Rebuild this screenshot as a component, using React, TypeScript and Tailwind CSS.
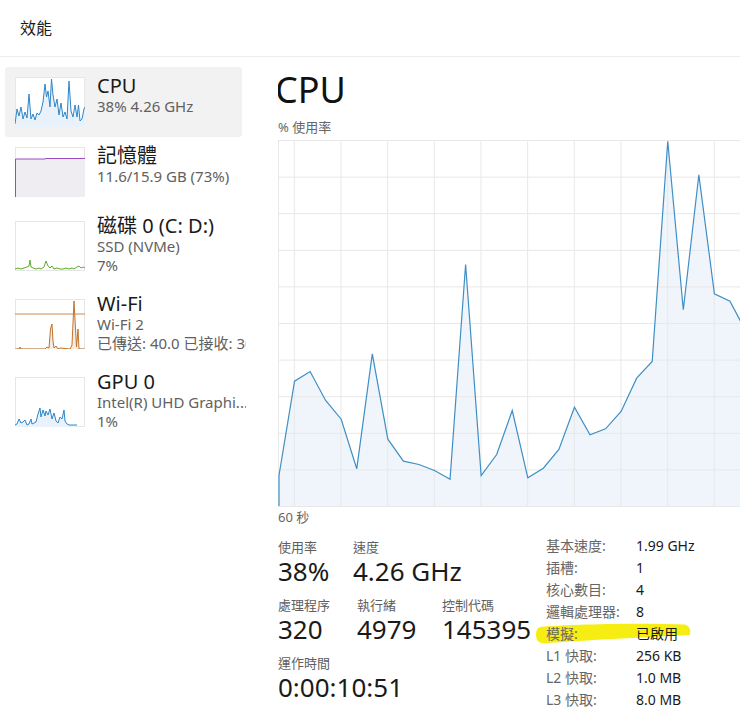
import React from "react";

// 主圖表資料 (y 以圖表頂端為 0)
const mainY = [
  335, 240.7, 231, 260, 278.7, 328.3, 213.3, 298.7, 320.7, 324, 330, 338.7, 124, 335, 314, 270,
  337.3, 327.7, 309, 266.7, 294.3, 288.3, 271, 237.7, 221, 0.7, 169.3, 34.3, 153.3, 160.7, 190,
];
const CH = 366;
const mainPts = mainY.map((y, i) => `${1 + i * 15.55},${y + 0.5}`).join(" ");
const mainArea = `1,${CH} ${mainPts} ${1 + 30 * 15.55},${CH}`;

const cpuThumb =
  "0,47 2,32 4,39 6,30 8,42 10,35 12,41 14,17 16,42 18,37 20,43 22,36 24,38 26,34 28,25 30,7 31.5,20 33,14 35,30 36.5,2 38,18 40,30 42,22 44,38 46,26 48,40 50,35 52,42 54,4 56,34 58,40 60,28 62,40 63.5,28 65,44 67,42 69,32 70,30";
const diskThumb =
  "0,48 3,47 6,48 9,47 12,46 14,45 15,39 16,46 18,47 21,48 24,47 26,48 29,46 31,40 33,45 35,47 37,45 39,48 42,47 45,48 48,48 51,47 54,48 57,47 59,48 62,46 64,45 66,47 68,46 70,47";
const wifiThumb =
  "0,50 4,50 5,48 6,50 30,50 32,48 34,49 35.5,30 37,25 38,42 39,49 41,47 43,50 45,49 55,50 57,46 59,2 60.5,30 61.5,48 63,30 64,50 70,50";
const gpuThumb =
  "0,48 2,47 4,42 6,46 8,45 10,43 12,48 14,47 16,42 17,47 19,46 21,45 23,37 25,31 26,40 28,33 30,39 31,34 33,38 35,32 37,42 39,36 41,44 43,46 45,40 47,42 49,33 50,44 52,47 54,48 62,48";

const Thumb = ({ kind }: { kind: string }) => (
  <svg width="70" height="50" viewBox="0 0 70 50" className="block">
    <rect x="0.5" y="0.5" width="69" height="49" fill="#fff" stroke="#e6e6e6" />
    {kind === "cpu" && (
      <>
        <polygon points={`0,50 ${cpuThumb} 70,50`} fill="#e9f2fa" />
        <polyline points={cpuThumb} fill="none" stroke="#2f86c8" strokeWidth="1" />
      </>
    )}
    {kind === "mem" && (
      <>
        <rect x="0" y="12" width="70" height="38" fill="#efedf1" />
        <polyline points="0.5,50 0.5,12 30,12 31,11.5 70,11.5" fill="none" stroke="#9a4bc0" strokeWidth="1" />
      </>
    )}
    {kind === "disk" && (
      <polyline points={diskThumb} fill="none" stroke="#5fae2e" strokeWidth="1" />
    )}
    {kind === "wifi" && (
      <>
        <line x1="0" y1="15" x2="70" y2="15" stroke="#d08a52" strokeWidth="1" />
        <polygon points={wifiThumb} fill="#f7ece2" />
        <polyline points={wifiThumb} fill="none" stroke="#c0732c" strokeWidth="1" />
      </>
    )}
    {kind === "gpu" && (
      <>
        <polygon points={`0,50 ${gpuThumb} 62,50`} fill="#e9f2fa" />
        <polyline points={gpuThumb} fill="none" stroke="#2f86c8" strokeWidth="1" />
      </>
    )}
  </svg>
);

const items = [
  { kind: "cpu", title: "CPU", lines: ["38% 4.26 GHz"], active: true },
  { kind: "mem", title: "記憶體", lines: ["11.6/15.9 GB (73%)"] },
  { kind: "disk", title: "磁碟 0 (C: D:)", lines: ["SSD (NVMe)", "7%"] },
  { kind: "wifi", title: "Wi-Fi", lines: ["Wi-Fi 2", "已傳送: 40.0 已接收: 30"] },
  { kind: "gpu", title: "GPU 0", lines: ["Intel(R) UHD Graphi...", "1%"] },
];

const specs = [
  ["基本速度:", "1.99 GHz"],
  ["插槽:", "1"],
  ["核心數目:", "4"],
  ["邏輯處理器:", "8"],
  ["模擬:", "已啟用"],
  ["L1 快取:", "256 KB"],
  ["L2 快取:", "1.0 MB"],
  ["L3 快取:", "8.0 MB"],
];

const Stat = ({ label, value, w }: { label: string; value: string; w: string }) => (
  <div className={w}>
    <div className="text-[13px] leading-[18px] text-[#5f5f5f] whitespace-nowrap">{label}</div>
    <div className="text-[26px] leading-[30px] text-[#1a1a1a] whitespace-nowrap">{value}</div>
  </div>
);

export default function App() {
  return (
    <div className="w-full h-[714px] overflow-hidden bg-white text-[#1a1a1a] font-[family-name:'Segoe_UI','Noto_Sans','Noto_Sans_CJK_TC',sans-serif]">
      <header className="h-[57px] border-b border-[#ececec] flex items-center pl-[20px] text-[16px]">效能</header>

      <div className="flex">
        <aside className="w-[278px] shrink-0 pt-[10px] pl-[5px]">
          {items.map((it) => (
            <div
              key={it.title}
              className={`flex w-[237px] min-h-[70px] rounded-[3px] ${it.active ? "bg-[#f2f2f2]" : ""}`}
            >
              <div className="self-center ml-[10px] mr-[12px] shrink-0">
                <Thumb kind={it.kind} />
              </div>
              <div className="w-[149px] shrink-0 overflow-hidden whitespace-nowrap pt-[8px] pb-[10px]">
                <div className="text-[20px] leading-[22px] text-[#1a1a1a]">{it.title}</div>
                {it.lines.map((l) => (
                  <div key={l} className="text-[15px] leading-[19px] text-[#616161]">
                    {l}
                  </div>
                ))}
              </div>
            </div>
          ))}
        </aside>

        <main className="flex-1 min-w-0 overflow-hidden pt-[11px]">
          <h1 className="text-[36px] leading-[44px] ml-[-3px] text-[#111]">CPU</h1>
          <div className="mt-[6px] text-[13px] leading-[18px] text-[#666]">% 使用率</div>

          <svg width="470" height="367" className="block mt-[4px]">
            <polygon points={mainArea} fill="#eff5fb" />
            {Array.from({ length: 11 }, (_, i) => (
              <line key={"h" + i} x1="0" x2="470" y1={0.5 + i * 36.6} y2={0.5 + i * 36.6} stroke="#e8e8e8" />
            ))}
            <line x1="0.5" x2="0.5" y1="0" y2="367" stroke="#e8e8e8" />
            {Array.from({ length: 10 }, (_, i) => (
              <line key={"v" + i} x1={16.3 + i * 46.67} x2={16.3 + i * 46.67} y1="0" y2="367" stroke="#e8e8e8" />
            ))}
            <polyline points={`1,${CH} ${mainPts}`} fill="none" stroke="#3f8fc4" strokeWidth="1.2" />
          </svg>

          <div className="mt-[1px] text-[13px] leading-[18px] text-[#666]">60 秒</div>

          <div className="flex items-start mt-[9px]">
            <div className="w-[268px] shrink-0 pt-[3px] flex flex-col gap-[10px]">
              <div className="flex">
                <Stat w="w-[75px]" label="使用率" value="38%" />
                <Stat w="w-[120px]" label="速度" value="4.26 GHz" />
              </div>
              <div className="flex">
                <Stat w="w-[79px]" label="處理程序" value="320" />
                <Stat w="w-[85px]" label="執行緒" value="4979" />
                <Stat w="w-[100px]" label="控制代碼" value="145395" />
              </div>
              <Stat w="w-[200px]" label="運作時間" value="0:00:10:51" />
            </div>

            <div className="relative">
              <svg
                width="158"
                height="22"
                viewBox="0 0 158 22"
                className="absolute left-[-11px] top-[88px]"
              >
                <path
                  d="M5,4 C40,1 110,0 150,1.5 Q157,4 155,12 C115,14 50,17 9,20.5 Q1,20 1,12 Q1,5 5,4 Z"
                  fill="#f6ee12"
                />
              </svg>
              {specs.map(([k, v]) => (
                <div key={k} className="relative flex text-[14px] leading-[22px]">
                  <span className="w-[90px] text-[#666]">{k}</span>
                  <span className="text-[#1a1a1a]">{v}</span>
                </div>
              ))}
            </div>
          </div>
        </main>
      </div>
    </div>
  );
}
